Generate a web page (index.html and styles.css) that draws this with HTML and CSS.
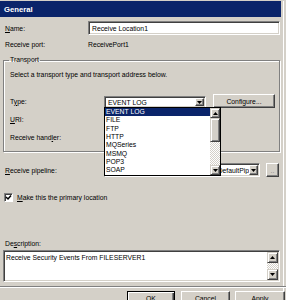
FILE: index.html
```html
<!DOCTYPE html>
<html>
<head>
<meta charset="utf-8">
<link rel="stylesheet" href="styles.css">
</head>
<body>
<div class="window">
  <div class="titlebar">General</div>
  <div class="content">
    <div class="row name-row">
      <span class="lbl lbl-main"><u>N</u>ame:</span>
      <div class="textbox">Receive Location1</div>
    </div>
    <div class="row port-row">
      <span class="lbl lbl-main">Receive port:</span>
      <span class="value">ReceivePort1</span>
    </div>
    <fieldset class="group">
      <legend>Transport</legend>
      <div class="hint">Select a transport type and transport address below.</div>
      <div class="row type-row">
        <span class="lbl lbl-group">T<u>y</u>pe:</span>
        <div class="combo type-combo">
          <span class="combo-text">EVENT LOG</span>
          <span class="combo-btn"><svg width="5" height="3" viewBox="0 0 5 3"><polygon points="0,0 5,0 2.5,3" fill="#000"/></svg></span>
          <div class="droplist">
            <ul class="items">
              <li class="sel">EVENT LOG</li>
              <li>FILE</li>
              <li>FTP</li>
              <li>HTTP</li>
              <li>MQSeries</li>
              <li>MSMQ</li>
              <li>POP3</li>
              <li>SOAP</li>
            </ul>
            <div class="vscroll list-scroll">
              <span class="sbtn"><svg width="5" height="3" viewBox="0 0 5 3"><polygon points="0,3 5,3 2.5,0" fill="#000"/></svg></span>
              <span class="thumb"></span>
              <span class="track"></span>
              <span class="sbtn"><svg width="5" height="3" viewBox="0 0 5 3"><polygon points="0,0 5,0 2.5,3" fill="#000"/></svg></span>
            </div>
          </div>
        </div>
        <button class="btn configure">Configure...</button>
      </div>
      <div class="row uri-row">
        <span class="lbl lbl-group"><u>U</u>RI:</span>
      </div>
      <div class="row handler-row">
        <span class="lbl lbl-group">Receive hand<u>l</u>er:</span>
      </div>
    </fieldset>
    <div class="row pipe-row">
      <span class="lbl lbl-pipe"><u>R</u>eceive pipeline:</span>
      <div class="combo pipe-combo">
        <span class="combo-text end">Microsoft.BizTalk.DefaultPip</span>
        <span class="combo-btn"><svg width="5" height="3" viewBox="0 0 5 3"><polygon points="0,0 5,0 2.5,3" fill="#000"/></svg></span>
      </div>
      <button class="btn dots">..</button>
    </div>
    <div class="row check-row">
      <span class="checkbox"><svg width="7" height="7" viewBox="0 0 7 7"><path d="M1 3 L3 5 L6 1.5" stroke="#000" stroke-width="1.5" fill="none"/></svg></span>
      <span class="check-label"><u>M</u>ake this the primary location</span>
    </div>
    <div class="desc-label">De<u>s</u>cription:</div>
    <div class="textarea">
      <div class="ta-text">Receive Security Events From FILESERVER1</div>
      <div class="vscroll ta-scroll">
        <span class="sbtn big"><svg width="5" height="3" viewBox="0 0 5 3"><polygon points="0,3 5,3 2.5,0" fill="#000"/></svg></span>
        <span class="track"></span>
        <span class="sbtn big"><svg width="5" height="3" viewBox="0 0 5 3"><polygon points="0,0 5,0 2.5,3" fill="#000"/></svg></span>
      </div>
    </div>
  </div>
  <div class="separator"></div>
  <div class="buttons">
    <button class="btn default ok">OK</button>
    <button class="btn cancel">Cancel</button>
    <button class="btn apply">Apply</button>
  </div>
</div>
</body>
</html>
```
FILE: styles.css
```css
* { box-sizing: border-box; }

body {
  margin: 0;
  width: 286px;
  height: 300px;
  overflow: hidden;
  background: #d4d0c8;
  font-family: "Liberation Sans", Arial, sans-serif;
  font-size: 6.8px;
  color: #000;
}

.window {
  width: 284px;
  height: 300px;
  border-right: 1px solid #ffffff;
}

.titlebar {
  margin-top: 1px;
  width: 281px;
  height: 16px;
  background: #0a246a;
  color: #fff;
  font-weight: bold;
  font-size: 7.7px;
  padding-left: 4px;
  display: flex;
  align-items: center;
}

.content {
  width: 280px;
  padding-left: 3px;
}

.row {
  display: flex;
  align-items: center;
  height: 14px;
}

.lbl { flex: none; }
.lbl-main { width: 85px; padding-left: 2px; }
.lbl-group { width: 94px; }
.lbl-pipe { width: 101px; padding-left: 2px; }

.name-row { margin-top: 4px; }
.port-row { margin-top: 2px; }

.textbox {
  flex: 1;
  height: 14px;
  background: #fff;
  border: 1px solid;
  border-color: #808080 #ffffff #ffffff #808080;
  box-shadow: inset 1px 1px 0 #404040, inset -1px -1px 0 #d4d0c8;
  padding-left: 3px;
  display: flex;
  align-items: center;
}

.group {
  margin: 5px 0 0 0;
  padding: 6px 4px 7px 6px;
  min-width: 0;
  border: 1px solid #808080;
  box-shadow: inset 1px 1px 0 #fff, 1px 1px 0 #fff;
}

.group legend {
  padding: 0 1px;
  margin-left: -1px;
  line-height: 8px;
}

.hint {
  height: 10px;
  line-height: 10px;
}

.type-row { margin-top: 14px; }
.uri-row { margin-top: 4px; }
.handler-row { margin-top: 4px; }

.combo {
  position: relative;
  flex: none;
  height: 12px;
  background: #fff;
  border: 1px solid;
  border-color: #808080 #ffffff #ffffff #808080;
  box-shadow: inset 1px 1px 0 #404040, inset -1px -1px 0 #d4d0c8;
  display: flex;
  align-items: stretch;
  padding: 2px 2px 2px 2px;
}

.type-combo {
  width: 102px;
  align-self: flex-end;
}

.combo-text {
  flex: 1;
  min-width: 0;
  overflow: hidden;
  white-space: nowrap;
  display: flex;
  align-items: center;
  padding-left: 1px;
}

.combo-text.end { justify-content: flex-end; }

.combo-btn {
  flex: none;
  width: 9px;
  background: #d4d0c8;
  border: 1px solid;
  border-color: #ffffff #404040 #404040 #ffffff;
  box-shadow: inset -1px -1px 0 #808080;
  display: flex;
  align-items: center;
  justify-content: center;
  margin: -1px -1px -1px 0;
}

.droplist {
  position: absolute;
  top: 100%;
  left: -1px;
  width: 117px;
  height: 69px;
  background: #fff;
  border: 1px solid #000;
  display: flex;
  z-index: 5;
}

.items {
  list-style: none;
  margin: 0;
  padding: 0;
  flex: 1;
}

.items li {
  height: 8.35px;
  line-height: 8.35px;
  padding-left: 1px;
  white-space: nowrap;
}

.items li.sel {
  background: #0a246a;
  color: #fff;
}

.vscroll {
  flex: none;
  display: flex;
  flex-direction: column;
}

.list-scroll { width: 10px; }

.sbtn {
  flex: none;
  height: 10px;
  background: #d4d0c8;
  border: 1px solid;
  border-color: #d4d0c8 #404040 #404040 #d4d0c8;
  box-shadow: inset 1px 1px 0 #fff, inset -1px -1px 0 #808080;
  display: flex;
  align-items: center;
  justify-content: center;
}

.thumb {
  flex: none;
  height: 24px;
  background: #d4d0c8;
  border: 1px solid;
  border-color: #d4d0c8 #404040 #404040 #d4d0c8;
  box-shadow: inset 1px 1px 0 #fff, inset -1px -1px 0 #808080;
}

.track {
  flex: 1;
  background-color: #d4d0c8;
  background-image: repeating-conic-gradient(#ffffff 0 25%, #d4d0c8 0 50%);
  background-size: 2px 2px;
}

.btn {
  font-family: inherit;
  font-size: inherit;
  color: #000;
  background: #d4d0c8;
  border: 1px solid;
  border-color: #ffffff #404040 #404040 #ffffff;
  box-shadow: inset -1px -1px 0 #808080;
  padding: 0;
  margin: 0;
  flex: none;
}

.configure {
  margin-left: 7px;
  width: 62px;
  height: 14px;
}

.pipe-row { margin-top: 11px; }

.pipe-combo {
  width: 156px;
  height: 14px;
}

.dots {
  margin-left: 6px;
  width: 13px;
  height: 14px;
  line-height: 14px;
  color: #808080;
}

.check-row {
  margin-top: 15px;
  height: 10px;
}

.checkbox {
  flex: none;
  margin-left: 1px;
  width: 9px;
  height: 9px;
  background: #fff;
  border: 1px solid;
  border-color: #808080 #ffffff #ffffff #808080;
  box-shadow: inset 1px 1px 0 #404040;
  display: flex;
  align-items: center;
  justify-content: center;
}

.check-label { margin-left: 4px; }

.desc-label {
  margin-top: 37px;
  height: 10px;
  line-height: 10px;
  padding-left: 2px;
}

.textarea {
  margin-top: 1px;
  width: 277px;
  height: 32px;
  background: #fff;
  border: 1px solid;
  border-color: #808080 #ffffff #ffffff #808080;
  box-shadow: inset 1px 1px 0 #404040, inset -1px -1px 0 #d4d0c8;
  padding: 1px;
  display: flex;
}

.ta-text {
  flex: 1;
  padding: 2px 0 0 1px;
  line-height: 8px;
  white-space: nowrap;
}

.ta-scroll { width: 11px; }
.sbtn.big { height: 11px; }

.separator {
  margin-top: 4px;
  width: 286px;
  height: 2px;
  border-top: 1px solid #808080;
  border-bottom: 1px solid #ffffff;
}

.buttons {
  margin-top: 3px;
  padding-left: 127px;
  display: flex;
  width: 300px;
}

.buttons .btn {
  height: 16px;
  padding-bottom: 2px;
}

.ok { width: 48px; }
.cancel { width: 49px; margin-left: 6px; }
.apply { width: 50px; margin-left: 5px; }

.btn.default {
  border: 1px solid #000;
  box-shadow: inset 1px 1px 0 #fff, inset -1px -1px 0 #404040, inset -2px -2px 0 #808080;
}
```
